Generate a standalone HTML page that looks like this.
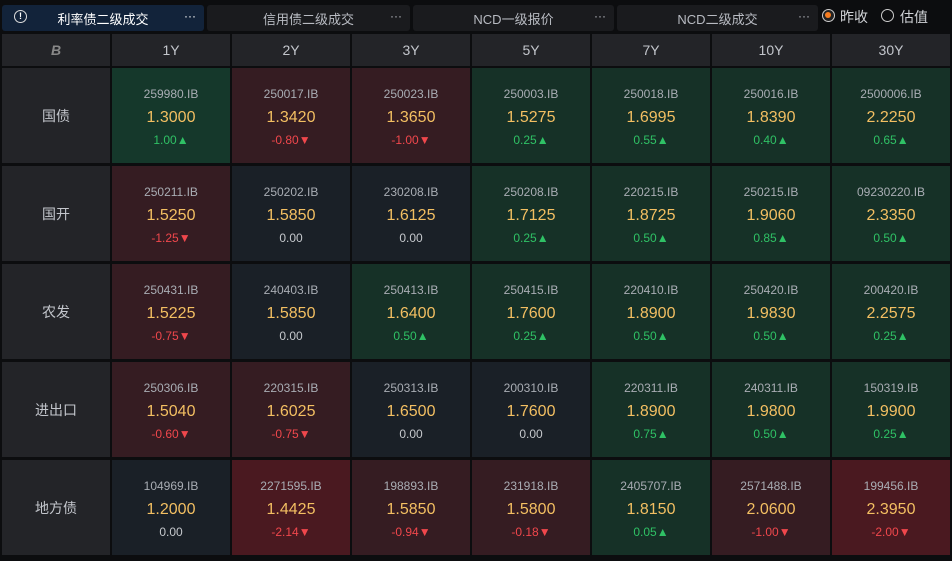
<!DOCTYPE html>
<html><head><meta charset="utf-8"><style>
*{margin:0;padding:0;box-sizing:border-box}
body{width:952px;height:561px;background:#0c0d0f;font-family:"Liberation Sans","Noto Sans CJK SC",sans-serif;position:relative;overflow:hidden;color:#c9ccd2}
.tab{position:absolute;top:5px;height:26px;background:#1a1b1e;border-radius:3px;font-size:13px;color:#b8bbc2;display:flex;align-items:center;justify-content:center}
.tab .d{position:absolute;right:8px;top:4px;font-size:12px;letter-spacing:0px}
.c{position:absolute;display:flex;flex-direction:column;align-items:center;justify-content:center}
.h{background:#232428;font-size:14px;color:#c3c6cc}
.code{font-size:12px;color:#a9adb4;height:24px;line-height:24px}
.y{font-size:16px;color:#f3bf62;height:24px;line-height:24px}
.ch{font-size:12px;height:20px;line-height:20px}
.g{color:#2fc165}.r{color:#f0474c}.n{color:#c5c8cc}
.G{background:#163127}.GG{background:#15382b}.R{background:#351c22}.RR{background:#4a1920}.N{background:#1a2027}
</style></head><body>
<div class="tab" style="left:2px;width:202px;background:#12233a;color:#fff"><span style="position:absolute;left:12px;top:5px;width:13px;height:13px;border:1.5px solid #ddd;border-radius:50%;font-size:9px;line-height:10px;text-align:center;font-weight:bold">!</span>利率债二级成交<span class="d">···</span></div>
<div class="tab" style="left:207px;width:203px">信用债二级成交<span class="d">···</span></div>
<div class="tab" style="left:413px;width:201px">NCD一级报价<span class="d">···</span></div>
<div class="tab" style="left:617px;width:201px">NCD二级成交<span class="d">···</span></div>
<div style="position:absolute;left:822px;top:9px;width:13px;height:13px;border:1.5px solid #ccc;border-radius:50%;background:#222"><div style="margin:2px;width:6px;height:6px;border-radius:50%;background:#f57c20"></div></div>
<div style="position:absolute;left:840px;top:7px;font-size:14px;color:#d0d2d6">昨收</div>
<div style="position:absolute;left:881px;top:9px;width:13px;height:13px;border:1.5px solid #ccc;border-radius:50%"></div>
<div style="position:absolute;left:900px;top:7px;font-size:14px;color:#d0d2d6">估值</div>
<div id="g"></div>
<script>
var cols=["1Y","2Y","3Y","5Y","7Y","10Y","30Y"];
var rows=[["国债",[["259980.IB","1.3000","1.00","GG"],["250017.IB","1.3420","-0.80","R"],["250023.IB","1.3650","-1.00","R"],["250003.IB","1.5275","0.25","G"],["250018.IB","1.6995","0.55","G"],["250016.IB","1.8390","0.40","G"],["2500006.IB","2.2250","0.65","G"]]],
["国开",[["250211.IB","1.5250","-1.25","R"],["250202.IB","1.5850","0.00","N"],["230208.IB","1.6125","0.00","N"],["250208.IB","1.7125","0.25","G"],["220215.IB","1.8725","0.50","G"],["250215.IB","1.9060","0.85","G"],["09230220.IB","2.3350","0.50","G"]]],
["农发",[["250431.IB","1.5225","-0.75","R"],["240403.IB","1.5850","0.00","N"],["250413.IB","1.6400","0.50","G"],["250415.IB","1.7600","0.25","G"],["220410.IB","1.8900","0.50","G"],["250420.IB","1.9830","0.50","G"],["200420.IB","2.2575","0.25","G"]]],
["进出口",[["250306.IB","1.5040","-0.60","R"],["220315.IB","1.6025","-0.75","R"],["250313.IB","1.6500","0.00","N"],["200310.IB","1.7600","0.00","N"],["220311.IB","1.8900","0.75","G"],["240311.IB","1.9800","0.50","G"],["150319.IB","1.9900","0.25","G"]]],
["地方债",[["104969.IB","1.2000","0.00","N"],["2271595.IB","1.4425","-2.14","RR"],["198893.IB","1.5850","-0.94","R"],["231918.IB","1.5800","-0.18","R"],["2405707.IB","1.8150","0.05","G"],["2571488.IB","2.0600","-1.00","R"],["199456.IB","2.3950","-2.00","RR"]]]];
var h="";
h+='<div class="c h" style="left:2px;top:34px;width:108px;height:32px;color:#888;font-weight:bold;font-style:italic">B</div>';
for(var i=0;i<7;i++)h+='<div class="c h" style="left:'+(112+i*120)+'px;top:34px;width:118px;height:32px">'+cols[i]+'</div>';
for(var r=0;r<5;r++){var t=68+r*98;
h+='<div class="c h" style="left:2px;top:'+t+'px;width:108px;height:95px">'+rows[r][0]+'</div>';
for(var i=0;i<7;i++){var d=rows[r][1][i];var v=parseFloat(d[2]);var cl=v>0?"g":v<0?"r":"n";var ar=v>0?"▲":v<0?"▼":"";
h+='<div class="c '+d[3]+'" style="left:'+(112+i*120)+'px;top:'+t+'px;width:118px;height:95px"><div class="code">'+d[0]+'</div><div class="y">'+d[1]+'</div><div class="ch '+cl+'">'+d[2]+ar+'</div></div>';}}
document.getElementById("g").innerHTML=h;
</script>
</body></html>
